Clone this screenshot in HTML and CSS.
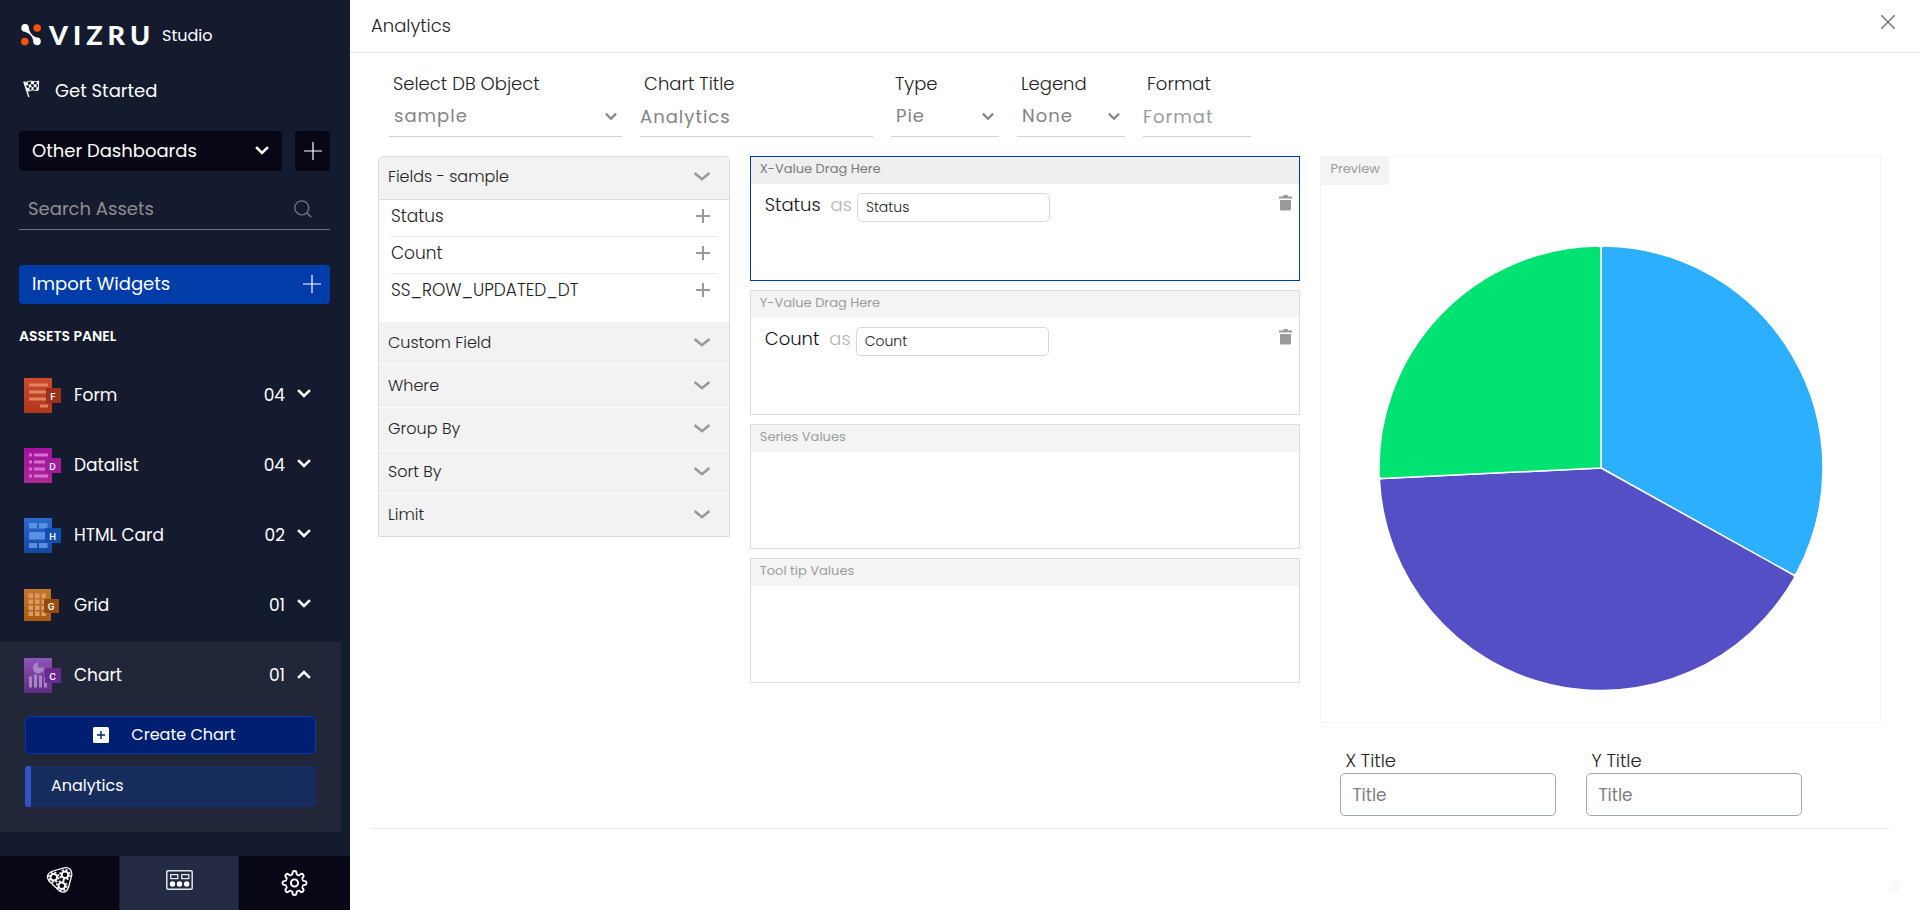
FILE: index.html
```html
<!DOCTYPE html>
<html lang="en">
<head>
<meta charset="utf-8">
<meta name="viewport" content="width=device-width, initial-scale=1">
<title>Vizru Studio - Analytics</title>
<link rel="stylesheet" href="styles.css">
</head>
<body class="app">
<svg class="sprite" aria-hidden="true">
  <symbol id="i-chev" viewBox="0 0 14 10"><path d="M2 2l5 5 5-5" fill="none" stroke="currentColor" stroke-width="2.6" stroke-linecap="square"/></symbol>
  <symbol id="i-chev-wide" viewBox="0 0 16 10"><path d="M0.6 1L8 7.2 15.4 1" fill="none" stroke="currentColor" stroke-width="2.5"/></symbol>
  <symbol id="i-plus" viewBox="0 0 18 18"><path d="M0 9h18M9 0v18" fill="none" stroke="currentColor" stroke-width="1.2"/></symbol>
  <symbol id="i-add" viewBox="0 0 14 14"><path d="M0 7h14M7 0v14" fill="none" stroke="currentColor" stroke-width="2"/></symbol>
  <symbol id="i-trash" viewBox="0 0 13 16"><path d="M4.2 0h4.6v1.4H13v2.2H0V1.4h4.2z M1 5h11v9a1.6 1.6 0 0 1-1.6 1.6H2.6A1.6 1.6 0 0 1 1 14z" fill="currentColor"/></symbol>
</svg>

<aside class="side">
  <div class="brand">
    <svg class="brand-mark" viewBox="0 0 20 22" aria-hidden="true">
      <circle cx="16.2" cy="4" r="3.8" fill="#ff4f0a"/><circle cx="3.8" cy="17.6" r="3.8" fill="#ff4f0a"/>
      <path d="M.4 4A3.7 3.7 0 0 1 7.8 3.6C8.2 7.8 11 12.4 16.2 13.6A3.8 3.8 0 1 1 12.2 17.6C12.2 13 8.6 9.4 3.8 7.8A3.7 3.7 0 0 1 .4 4z" fill="#fff"/>
    </svg>
    <span class="brand-name">VIZRU</span>
    <span class="brand-sub">Studio</span>
  </div>

  <a class="start" href="#start">
    <svg class="start-icon" viewBox="0 0 18 18" aria-hidden="true">
      <path d="M.8 1.2L6.2 17.5" stroke="#fff" stroke-width="1.4"/>
      <path d="M1.5 1.5C4 3 6-.2 9.5.8S14 1 16.6.6L16.2 10.2C13 11.6 11 9.2 8.5 10.2S6 11.8 4.6 10.8z" fill="none" stroke="#fff"/>
      <path d="M2 2.2l3-.4.8 3-2.8.4zM8.5.8l3.2.5-.2 3-3-.6zM14.8.8h1.8l-.2 3-2 .2zM5.8 4.8l2.8-1 .4 3.2-2.4.8zM11.5 4.3l3-.3-.3 3.2-2.9-.2zM4 7.8l2.6 0 .6 3-2.4.2zM9 7l2.3 0-.2 3-2 0zM14.2 7.2l2.1-.4-.1 3.2-2.2.6z" fill="#fff"/>
    </svg>
    Get Started
  </a>

  <div class="board">
    <label class="pick pick-dark">
      <select class="pick-input" aria-label="Dashboard"><option>Other Dashboards</option></select>
      <svg class="pick-chev"><use href="#i-chev"/></svg>
    </label>
    <button class="board-add" aria-label="Add dashboard"><svg class="plus"><use href="#i-plus"/></svg></button>
  </div>

  <div class="search">
    <input class="search-input" type="search" placeholder="Search Assets" aria-label="Search Assets">
    <svg class="search-icon" viewBox="0 0 18 18" aria-hidden="true"><circle cx="7.8" cy="7.8" r="7" fill="none" stroke="currentColor" stroke-width="1.3"/><path d="M12.8 12.8l4.4 4.4" stroke="currentColor" stroke-width="1.5"/></svg>
  </div>

  <button class="import">Import Widgets <svg class="plus"><use href="#i-plus"/></svg></button>

  <h2 class="side-title">ASSETS PANEL</h2>

  <button class="asset">
    <svg class="asset-icon" viewBox="0 0 37 35" aria-hidden="true">
      <defs><linearGradient id="gf" x2="0" y2="1"><stop stop-color="#cf4b2b"/><stop offset="1" stop-color="#b0361a"/></linearGradient></defs>
      <path d="M0 0h28v35H0z" fill="url(#gf)"/><path d="M5 5.5h19v3H5zM5 12.5h17v3H5zM5 19.5h17v3H5zM16 26.5h8v3h-8z" fill="#e08468"/>
      <path d="M22 10h15v15H22z" fill="#9b3118"/><text x="29" y="21.5" class="asset-letter">F</text>
    </svg>
    <span class="asset-name">Form</span><span class="asset-count">04</span><svg class="asset-chev"><use href="#i-chev"/></svg>
  </button>
  <button class="asset">
    <svg class="asset-icon" viewBox="0 0 37 35" aria-hidden="true">
      <defs><linearGradient id="gd" x2="0" y2="1"><stop stop-color="#a3129f"/><stop offset="1" stop-color="#ad2795"/></linearGradient></defs>
      <path d="M0 0h28v35H0z" fill="url(#gd)"/><path d="M5 5.5h3v3H5zM10 5.5h14v3H10zM5 12.5h3v3H5zM10 12.5h12v3H10zM5 19.5h3v3H5zM10 19.5h12v3H10zM5 26.5h3v3H5zM10 26.5h14v3H10z" fill="#d56fd0"/>
      <path d="M21 10h16v15H21z" fill="#a01c99"/><text x="28.5" y="21.5" class="asset-letter">D</text>
    </svg>
    <span class="asset-name">Datalist</span><span class="asset-count">04</span><svg class="asset-chev"><use href="#i-chev"/></svg>
  </button>
  <button class="asset">
    <svg class="asset-icon" viewBox="0 0 37 35" aria-hidden="true">
      <defs><linearGradient id="gh" x2="0" y2="1"><stop stop-color="#2a6bd0"/><stop offset="1" stop-color="#16479f"/></linearGradient></defs>
      <path d="M0 0h28v35H0z" fill="url(#gh)"/><path d="M5 5h8v5.5H5zM15 5h8.5v5.5H15zM5 14h17v7.5H5zM5 25h8v5H5zM15 25h8.5v5H15z" fill="#5a90e4"/>
      <path d="M21 10h16v15H21z" fill="#114fb0"/><text x="28.5" y="21.5" class="asset-letter">H</text>
    </svg>
    <span class="asset-name">HTML Card</span><span class="asset-count">02</span><svg class="asset-chev"><use href="#i-chev"/></svg>
  </button>
  <button class="asset">
    <svg class="asset-icon" viewBox="0 0 37 35" aria-hidden="true">
      <defs><linearGradient id="gg" x2="0" y2="1"><stop stop-color="#c4742c"/><stop offset="1" stop-color="#ab5c13"/></linearGradient></defs>
      <path d="M0 1h27v32H0z" fill="url(#gg)"/><path d="M4.5 5.5h4.5v4.5h-4.5zM11 5.5h4.5v4.5H11zM17.5 5.5h4.5v4.5h-4.5zM4.5 11.5h4.5v4.5h-4.5zM11 11.5h4.5v4.5H11zM17.5 11.5h2.5v4.5h-2.5zM4.5 17.5h4.5v4.5h-4.5zM11 17.5h4.5v4.5H11zM17.5 17.5h2.5v4.5h-2.5zM4.5 23.5h4.5v4.5h-4.5zM11 23.5h4.5v4.5H11zM17.5 23.5h4.5v4.5h-4.5z" fill="#d99c67"/>
      <path d="M20 11h15v14H20z" fill="#964c0c"/><text x="27" y="22" class="asset-letter">G</text>
    </svg>
    <span class="asset-name">Grid</span><span class="asset-count">01</span><svg class="asset-chev"><use href="#i-chev"/></svg>
  </button>

  <section class="open">
    <button class="asset asset-open" aria-expanded="true">
      <svg class="asset-icon" viewBox="0 0 37 35" aria-hidden="true">
        <defs><linearGradient id="gc" x2="0" y2="1"><stop stop-color="#8f54b8"/><stop offset="1" stop-color="#5c2f80"/></linearGradient></defs>
        <path d="M0 0h28v35H0z" fill="url(#gc)"/><path d="M14 4.5a5.5 5.5 0 1 0 6 5h-6zM5 18.5h3v11H5zM10 16.5h3v13h-3zM15 17.5h3v12h-3zM20 19.5h3v10h-3z" fill="#ab83c9"/>
        <path d="M21 10h16v15H21z" fill="#672a92"/><text x="28.5" y="21.5" class="asset-letter">C</text>
      </svg>
      <span class="asset-name">Chart</span><span class="asset-count">01</span><svg class="asset-chev flip"><use href="#i-chev"/></svg>
    </button>
    <button class="create">
      <svg class="create-icon" viewBox="0 0 16 16" aria-hidden="true"><rect width="16" height="16" rx="1.5" fill="#fff"/><path d="M4 8h8M8 4v8" stroke="#001f73" stroke-width="1.4"/></svg>
      Create Chart
    </button>
    <a class="chart-link" href="#analytics">Analytics</a>
  </section>

  <nav class="tabs">
    <button class="tab tab-raised" aria-label="Workflows">
      <svg class="tab-icon" viewBox="0 0 26 26" aria-hidden="true">
        <path d="M5 4.5L17.5.8Q25.5-.4 25.3 8L22 20.5Q19.5 27.5 13 24L2.5 14Q-1.5 7.5 5 4.5z" fill="none" stroke="#fff" stroke-width="1.3"/>
        <g fill="none" stroke="#fff"><circle cx="7.3" cy="10.3" r="3.3" stroke-width="2"/><circle cx="7.3" cy="10.3" r="5" stroke-width="1.6" stroke-dasharray="2 1.93"/>
        <circle cx="18.5" cy="7.8" r="3.3" stroke-width="2"/><circle cx="18.5" cy="7.8" r="5" stroke-width="1.6" stroke-dasharray="2 1.93"/>
        <circle cx="15.3" cy="18.8" r="3.3" stroke-width="2"/><circle cx="15.3" cy="18.8" r="5" stroke-width="1.6" stroke-dasharray="2 1.93"/></g>
      </svg>
    </button>
    <button class="tab tab-raised tab-on" aria-label="Dashboards">
      <svg class="tab-icon" viewBox="0 0 27 20" aria-hidden="true">
        <rect x=".8" y=".8" width="25.4" height="18.4" rx="1.2" fill="none" stroke="#e4e6ea" stroke-width="1.5"/>
        <path d="M4.7 4.7h7.1v4H4.7zM15.7 4.7h7.1v4h-7.1z" fill="none" stroke="#e4e6ea" stroke-width="1.3"/>
        <g fill="#fff"><circle cx="6.5" cy="14" r="2.7"/><circle cx="13.5" cy="14" r="2.7"/><circle cx="20.7" cy="14" r="2.7"/></g>
      </svg>
    </button>
    <button class="tab" aria-label="Settings">
      <svg class="tab-icon" viewBox="-13 -13 26 26" aria-hidden="true">
        <defs><path id="cog" d="M-3.5-8.5C-2.2-8-2-9-1.9-10.6Q-1.8-12 0-12Q1.8-12 1.9-10.6C2-9 2.2-8 3.5-8.5"/></defs>
        <g fill="none" stroke="#fff" stroke-width="1.9"><use href="#cog"/><use href="#cog" transform="rotate(45)"/><use href="#cog" transform="rotate(90)"/><use href="#cog" transform="rotate(135)"/><use href="#cog" transform="rotate(180)"/><use href="#cog" transform="rotate(225)"/><use href="#cog" transform="rotate(270)"/><use href="#cog" transform="rotate(315)"/><circle r="3.6"/></g>
      </svg>
    </button>
  </nav>
</aside>

<main class="main">
  <header class="head">
    <h1 class="head-title">Analytics</h1>
    <button class="close" aria-label="Close"><svg class="close-icon" viewBox="0 0 14 14"><path d="M0 0l14 14M14 0L0 14" stroke="currentColor" stroke-width="1.5"/></svg></button>
  </header>

  <form class="setup">
    <div class="field field-wide">
      <label class="field-label" for="db">Select DB Object</label>
      <div class="pick"><select class="pick-input" id="db"><option>sample</option></select><svg class="pick-chev"><use href="#i-chev"/></svg></div>
    </div>
    <div class="field field-wide">
      <label class="field-label" for="title">Chart Title</label>
      <input class="field-input" id="title" type="text" value="Analytics">
    </div>
    <div class="field">
      <label class="field-label" for="type">Type</label>
      <div class="pick"><select class="pick-input" id="type"><option>Pie</option></select><svg class="pick-chev"><use href="#i-chev"/></svg></div>
    </div>
    <div class="field">
      <label class="field-label" for="legend">Legend</label>
      <div class="pick"><select class="pick-input" id="legend"><option>None</option></select><svg class="pick-chev"><use href="#i-chev"/></svg></div>
    </div>
    <div class="field">
      <label class="field-label" for="format">Format</label>
      <input class="field-input" id="format" type="text" placeholder="Format">
    </div>
  </form>

  <div class="work">
    <section class="panel">
      <button class="fold fold-first">Fields - sample <svg class="fold-chev"><use href="#i-chev-wide"/></svg></button>
      <ul class="columns">
        <li class="column">Status <button class="column-add" aria-label="Add Status"><svg class="add"><use href="#i-add"/></svg></button></li>
        <li class="column">Count <button class="column-add" aria-label="Add Count"><svg class="add"><use href="#i-add"/></svg></button></li>
        <li class="column">SS_ROW_UPDATED_DT <button class="column-add" aria-label="Add SS_ROW_UPDATED_DT"><svg class="add"><use href="#i-add"/></svg></button></li>
      </ul>
      <button class="fold">Custom Field <svg class="fold-chev"><use href="#i-chev-wide"/></svg></button>
      <button class="fold">Where <svg class="fold-chev"><use href="#i-chev-wide"/></svg></button>
      <button class="fold">Group By <svg class="fold-chev"><use href="#i-chev-wide"/></svg></button>
      <button class="fold">Sort By <svg class="fold-chev"><use href="#i-chev-wide"/></svg></button>
      <button class="fold">Limit <svg class="fold-chev"><use href="#i-chev-wide"/></svg></button>
    </section>

    <section class="drops">
      <div class="drop drop-on">
        <h3 class="drop-title">X-Value Drag Here</h3>
        <div class="value"><label class="value-name" for="x-as">Status <span class="value-as">as</span></label><input class="value-input" id="x-as" type="text" value="Status"><button class="value-del" aria-label="Remove Status"><svg class="trash"><use href="#i-trash"/></svg></button></div>
      </div>
      <div class="drop">
        <h3 class="drop-title">Y-Value Drag Here</h3>
        <div class="value"><label class="value-name" for="y-as">Count <span class="value-as">as</span></label><input class="value-input" id="y-as" type="text" value="Count"><button class="value-del" aria-label="Remove Count"><svg class="trash"><use href="#i-trash"/></svg></button></div>
      </div>
      <div class="drop"><h3 class="drop-title">Series Values</h3></div>
      <div class="drop"><h3 class="drop-title">Tool tip Values</h3></div>
    </section>

    <section class="result">
      <div class="preview">
        <h3 class="preview-tag">Preview</h3>
        <svg class="pie" viewBox="-223 -223 446 446" role="img" aria-label="Pie chart with three slices">
          <g stroke="#fff" stroke-width="1.5" stroke-linejoin="round">
            <path d="M0 0V-219Q0-222 3-222A222 222 0 0 1 195.5 105.2Q194 108 191.6 106.5z" fill="#2caffe"/>
            <path d="M0 0L191.6 106.5Q194.6 108 193 110.5A222 222 0 0 1-221.5 13.5Q-221.8 10.5-218.8 10.4z" fill="#544fc5"/>
            <path d="M0 0L-218.8 10.4Q-221.8 10.5-221.9 7.5A222 222 0 0 1-3-222Q0-222 0-219z" fill="#00e272"/>
          </g>
        </svg>
      </div>
      <div class="axes">
        <div class="axis"><label class="axis-label" for="x-title">X Title</label><input class="axis-input" id="x-title" type="text" placeholder="Title"></div>
        <div class="axis"><label class="axis-label" for="y-title">Y Title</label><input class="axis-input" id="y-title" type="text" placeholder="Title"></div>
      </div>
    </section>
  </div>
  <hr class="rule">
  <div class="glow"></div>
</main>
</body>
</html>
```
FILE: styles.css
```css
* { box-sizing: border-box; }
.app {
  margin: 0;
  min-height: 100vh;
  display: grid;
  grid-template-columns: 350px minmax(0, 1fr);
  font: 400 18px/24px Poppins, Inter, "Liberation Sans", sans-serif;
  color: #222;
  background: #fff;
}
.sprite { position: absolute; width: 0; height: 0; }
button, input, select { font: inherit; color: inherit; letter-spacing: inherit; margin: 0; padding: 0; border: 0; background: none; border-radius: 0; }
button { cursor: pointer; }
input, select { min-width: 0; width: 100%; outline: 0; }
a { color: inherit; text-decoration: none; }
h1, h2, h3, ul { margin: 0; padding: 0; font: inherit; }

/* Sidebar */
.side { display: flex; flex-direction: column; padding-top: 20px; background: #151b2f; color: #fff; }
.brand { display: flex; align-items: center; height: 30px; margin-left: 21px; }
.brand-mark { width: 20px; height: 22px; }
.brand-name { margin-left: 8px; font: 900 27px/30px Lato, sans-serif; letter-spacing: 5px; }
.brand-sub { margin-left: 7px; padding-top: 2px; font-size: 16px; }
.start { display: flex; align-items: center; gap: 15px; margin: 29px 0 0 23px; }
.start-icon { width: 17px; height: 18px; margin-bottom: 4px; }
.board { display: flex; gap: 13px; margin: 28px 20px 0 19px; }
.pick { display: grid; grid-template-columns: minmax(0, 1fr) auto; align-items: center; }
.pick-input { grid-area: 1 / 1 / 2 / 3; appearance: none; }
.pick-chev { grid-area: 1 / 2; width: 14px; height: 10px; pointer-events: none; }
.pick-dark { flex: 1; height: 40px; padding: 0 13px 1px; border-radius: 4px; background: #070715; }
.board-add { display: grid; place-items: center; width: 35px; border-radius: 4px; background: #070715; }
.plus { width: 18px; height: 18px; }
.search { display: flex; align-items: center; height: 40px; margin: 19px 20px 0 19px; padding: 0 18px 2px 9px; border-bottom: 1px solid #6b7077; }
.search-input::placeholder { color: #8e8e90; opacity: 1; }
.search-icon { flex: none; width: 18px; height: 18px; color: #73777f; }
.import { display: flex; align-items: center; justify-content: space-between; height: 39px; margin: 35px 20px 0 19px; padding: 0 9px 2px 13px; border-radius: 4px; background: #003da9; }
.side-title { margin: 20px 0 12px 19px; font-size: 14px; font-weight: 600; }
.asset { display: flex; align-items: center; height: 70px; padding: 0 39px 0 24px; text-align: left; font-size: 17px; color: #fff; }
.asset-icon { width: 37px; height: 35px; }
.asset-letter { font: 600 9px Inter, sans-serif; fill: #fff; text-anchor: middle; }
.asset-name { flex: 1; margin-left: 13px; }
.asset-count { margin-right: 12px; }
.asset-chev { width: 14px; height: 10px; margin-bottom: 2px; }
.flip { rotate: 180deg; }
.open { display: flex; flex-direction: column; margin: 2px 9px 0 0; padding-bottom: 25px; background: #212639; }
.asset-open { height: 66px; padding-right: 30px; }
.create { display: flex; align-items: center; justify-content: center; gap: 22px; height: 38px; margin: 8px 25px 12px; padding-right: 12px; border: 1px solid #003da9; border-radius: 5px; background: #001f73; color: #fff; font-size: 16px; }
.create-icon { width: 16px; height: 16px; }
.chart-link { display: block; margin: 0 25px; padding: 8px 20px 9px; border-left: 6px solid #3453c9; border-radius: 3px 0 0 3px; background: #162d5e; font-size: 16px; }
.tabs { display: grid; grid-template-columns: 119fr 118fr 111fr; gap: 1px; height: 54px; margin-top: auto; }
.tab { display: grid; place-items: center; background: #070715; }
.tab-raised { padding-bottom: 6px; }
.tab-on { background: #232a42; }
.tab-icon { width: 27px; height: 26px; }

/* Main area */
.main { display: flex; flex-direction: column; font-weight: 300; }
.head { display: flex; align-items: center; justify-content: space-between; height: 53px; padding: 0 25px 0 21px; border-bottom: 1px solid #e2e2e2; }
.close { display: grid; margin-bottom: 8px; color: #777; }
.close-icon { width: 14px; height: 14px; }
.setup { display: flex; gap: 18px; margin: 19px 38px 0 39px; }
.field { width: 108px; }
.field-wide { width: 233px; }
.field-label { display: block; padding-left: 4px; }
.field .pick, .field-input { height: 41px; border-bottom: 1px solid #d3d3d3; font-weight: 400; letter-spacing: 1px; color: #848484; }
.field .pick { padding: 0 5px; }
.field .pick-chev { width: 12px; margin-top: 2px; }
.field-input::placeholder { color: #9c9c9c; opacity: 1; }
.work { display: grid; grid-template-columns: 352fr 551fr 561fr; gap: 20px; align-items: start; margin: 19px 39px 0 28px; }
.panel { border: 1px solid #ddd; border-radius: 5px 5px 0 0; font-size: 16px; }
.fold { display: flex; align-items: center; justify-content: space-between; width: 100%; height: 43px; padding: 0 19px 0 9px; border-top: 1px solid #fff; background: #f2f2f2; }
.fold-first { padding-bottom: 2px; border-top: 0; border-bottom: 1px solid #ddd; border-radius: 4px 4px 0 0; }
.fold-chev { width: 16px; height: 10px; color: #999; }
.columns { list-style: none; padding: 0 12px 10px; font-size: 17px; }
.column { display: flex; align-items: center; justify-content: space-between; height: 37px; padding: 0 7px 5px 0; border-bottom: 1px solid #eaeaea; }
.column:last-child { border-bottom: 0; }
.column-add { display: grid; color: #999; }
.add { width: 14px; height: 14px; }
.drops { display: grid; gap: 9px; }
.drop { min-height: 125px; border: 1px solid #ddd; }
.drop-on { border-color: #003da9; }
.drop-title { padding: 0 9px 3px; font-size: 13px; font-weight: 400; background: #f4f4f4; color: #9c9c9c; }
.drop-on .drop-title { background: #efefef; color: #7a7a7a; }
.value { display: flex; align-items: flex-start; padding: 9px 7px 0 14px; }
.value-name { flex: none; color: #111; }
.value-as { margin: 0 5px; color: #b5b5b5; }
.value-input { width: 193px; height: 29px; padding: 0 8px; border: 1px solid #d8d8d8; border-radius: 5px; font-size: 14px; }
.value-del { display: grid; margin: 2px 0 0 auto; color: #9a9a9a; }
.trash { width: 13px; height: 16px; }
.preview { display: flex; flex-direction: column; align-items: center; border: 1px solid #f4f4f4; padding-bottom: 31px; }
.preview-tag { align-self: flex-start; padding: 0 9px 4px; border-radius: 0 0 4px 0; background: #f4f4f4; font-size: 13px; font-weight: 400; color: #9c9c9c; }
.pie { width: 80%; max-width: 446px; margin-top: 60px; }
.axes { display: flex; gap: 30px; margin: 26px 0 0 20px; }
.axis { width: 216px; }
.axis-label { display: block; padding-left: 5px; }
.axis-input { height: 43px; padding: 0 11px; border: 1px solid #9ea7b6; border-radius: 5px; font-size: 17px; font-weight: 400; }
.axis-input::placeholder { color: #808080; opacity: 1; }
.rule { width: auto; margin: 12px 31px 0 20px; border: 0; border-top: 1px solid #ebebeb; }
.glow { width: 20px; height: 20px; margin: auto 15px 13px auto; border-radius: 50%; background: radial-gradient(#f8f8f8, #fff 70%); }
```
